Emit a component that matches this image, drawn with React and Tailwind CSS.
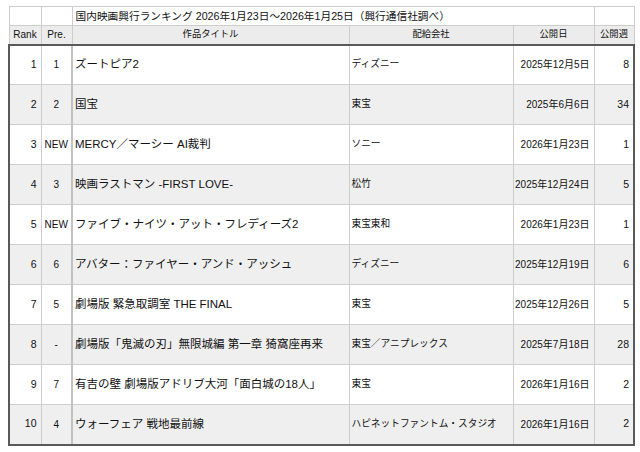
import React from "react";

// ─── Data ─────────────────────────────────────────────────────────────────────
const rows = [
  { rank: 1, pre: "1", title: "ズートピア2", dist: "ディズニー", date: "2025年12月5日", weeks: 8 },
  { rank: 2, pre: "2", title: "国宝", dist: "東宝", date: "2025年6月6日", weeks: 34 },
  { rank: 3, pre: "NEW", title: "MERCY／マーシー AI裁判", dist: "ソニー", date: "2026年1月23日", weeks: 1 },
  { rank: 4, pre: "3", title: "映画ラストマン -FIRST LOVE-", dist: "松竹", date: "2025年12月24日", weeks: 5 },
  { rank: 5, pre: "NEW", title: "ファイブ・ナイツ・アット・フレディーズ2", dist: "東宝東和", date: "2026年1月23日", weeks: 1 },
  { rank: 6, pre: "6", title: "アバター：ファイヤー・アンド・アッシュ", dist: "ディズニー", date: "2025年12月19日", weeks: 6 },
  { rank: 7, pre: "5", title: "劇場版 緊急取調室 THE FINAL", dist: "東宝", date: "2025年12月26日", weeks: 5 },
  { rank: 8, pre: "-", title: "劇場版「鬼滅の刃」無限城編 第一章 猗窩座再来", dist: "東宝／アニプレックス", date: "2025年7月18日", weeks: 28 },
  { rank: 9, pre: "7", title: "有吉の壁 劇場版アドリブ大河「面白城の18人」", dist: "東宝", date: "2026年1月16日", weeks: 2 },
  { rank: 10, pre: "4", title: "ウォーフェア 戦地最前線", dist: "ハピネットファントム・スタジオ", date: "2026年1月16日", weeks: 2 },
];

const light = "border border-[#cdcdcd]";

export default function App() {
  return (
    <div className="min-h-[452px] w-[640px] bg-white pl-[8px] pt-[6px] font-['Liberation_Sans','Noto_Sans_CJK_JP',sans-serif] text-[#111]">
      <table className="w-[625px] table-fixed border-collapse">
        <colgroup>
          <col className="w-[32px]" />
          <col className="w-[31px]" />
          <col className="w-[277px]" />
          <col className="w-[164px]" />
          <col className="w-[81px]" />
          <col className="w-[40px]" />
        </colgroup>
        <thead>
          {/* title row */}
          <tr className="h-[19px]">
            <td className={light} />
            <td className={light} />
            <td colSpan={3} className={`${light} pl-[3px] text-[10.7px] leading-none whitespace-nowrap`}>
              国内映画興行ランキング 2026年1月23日〜2026年1月25日（興行通信社調べ）
            </td>
            <td className={light} />
          </tr>
          {/* column headers */}
          <tr className="h-[19px] bg-[#ececec] text-[10px] leading-none">
            <th className={`${light} border-b-2 border-b-[#5a5a5a] font-normal`}>Rank</th>
            <th className={`${light} border-b-2 border-b-[#5a5a5a] font-normal`}>Pre.</th>
            <th className={`${light} border-b-2 border-b-[#5a5a5a] text-[9.3px] font-normal`}>作品タイトル</th>
            <th className={`${light} border-b-2 border-b-[#5a5a5a] text-[9.3px] font-normal`}>配給会社</th>
            <th className={`${light} border-b-2 border-b-[#5a5a5a] text-[9.3px] font-normal`}>公開日</th>
            <th className={`${light} border-b-2 border-b-[#5a5a5a] text-[9.3px] font-normal`}>公開週</th>
          </tr>
        </thead>
        <tbody>
          {rows.map((r, i) => {
            const last = i === rows.length - 1;
            const bottom = last ? "border-b-2 border-b-[#5a5a5a]" : "";
            return (
              <tr key={r.rank} className={`h-[40px] ${i % 2 === 1 ? "bg-[#efefef]" : "bg-white"}`}>
                <td className={`${light} ${bottom} border-l-2 border-l-[#5a5a5a] pr-[4px] text-right text-[10.5px]`}>{r.rank}</td>
                <td className={`${light} ${bottom} border-r-2 border-r-[#c2c2c2] text-center text-[10px]`}>{r.pre}</td>
                <td className={`${light} ${bottom} pl-[2px] text-[11.5px] whitespace-nowrap`}>{r.title}</td>
                <td className={`${light} ${bottom} pl-[2px] text-[9.7px] whitespace-nowrap`}>{r.dist}</td>
                <td className={`${light} ${bottom} pr-[4px] text-right text-[10px] whitespace-nowrap`}>{r.date}</td>
                <td className={`${light} ${bottom} border-r-2 border-r-[#5a5a5a] pr-[4px] text-right text-[10.5px]`}>{r.weeks}</td>
              </tr>
            );
          })}
        </tbody>
      </table>
    </div>
  );
}
